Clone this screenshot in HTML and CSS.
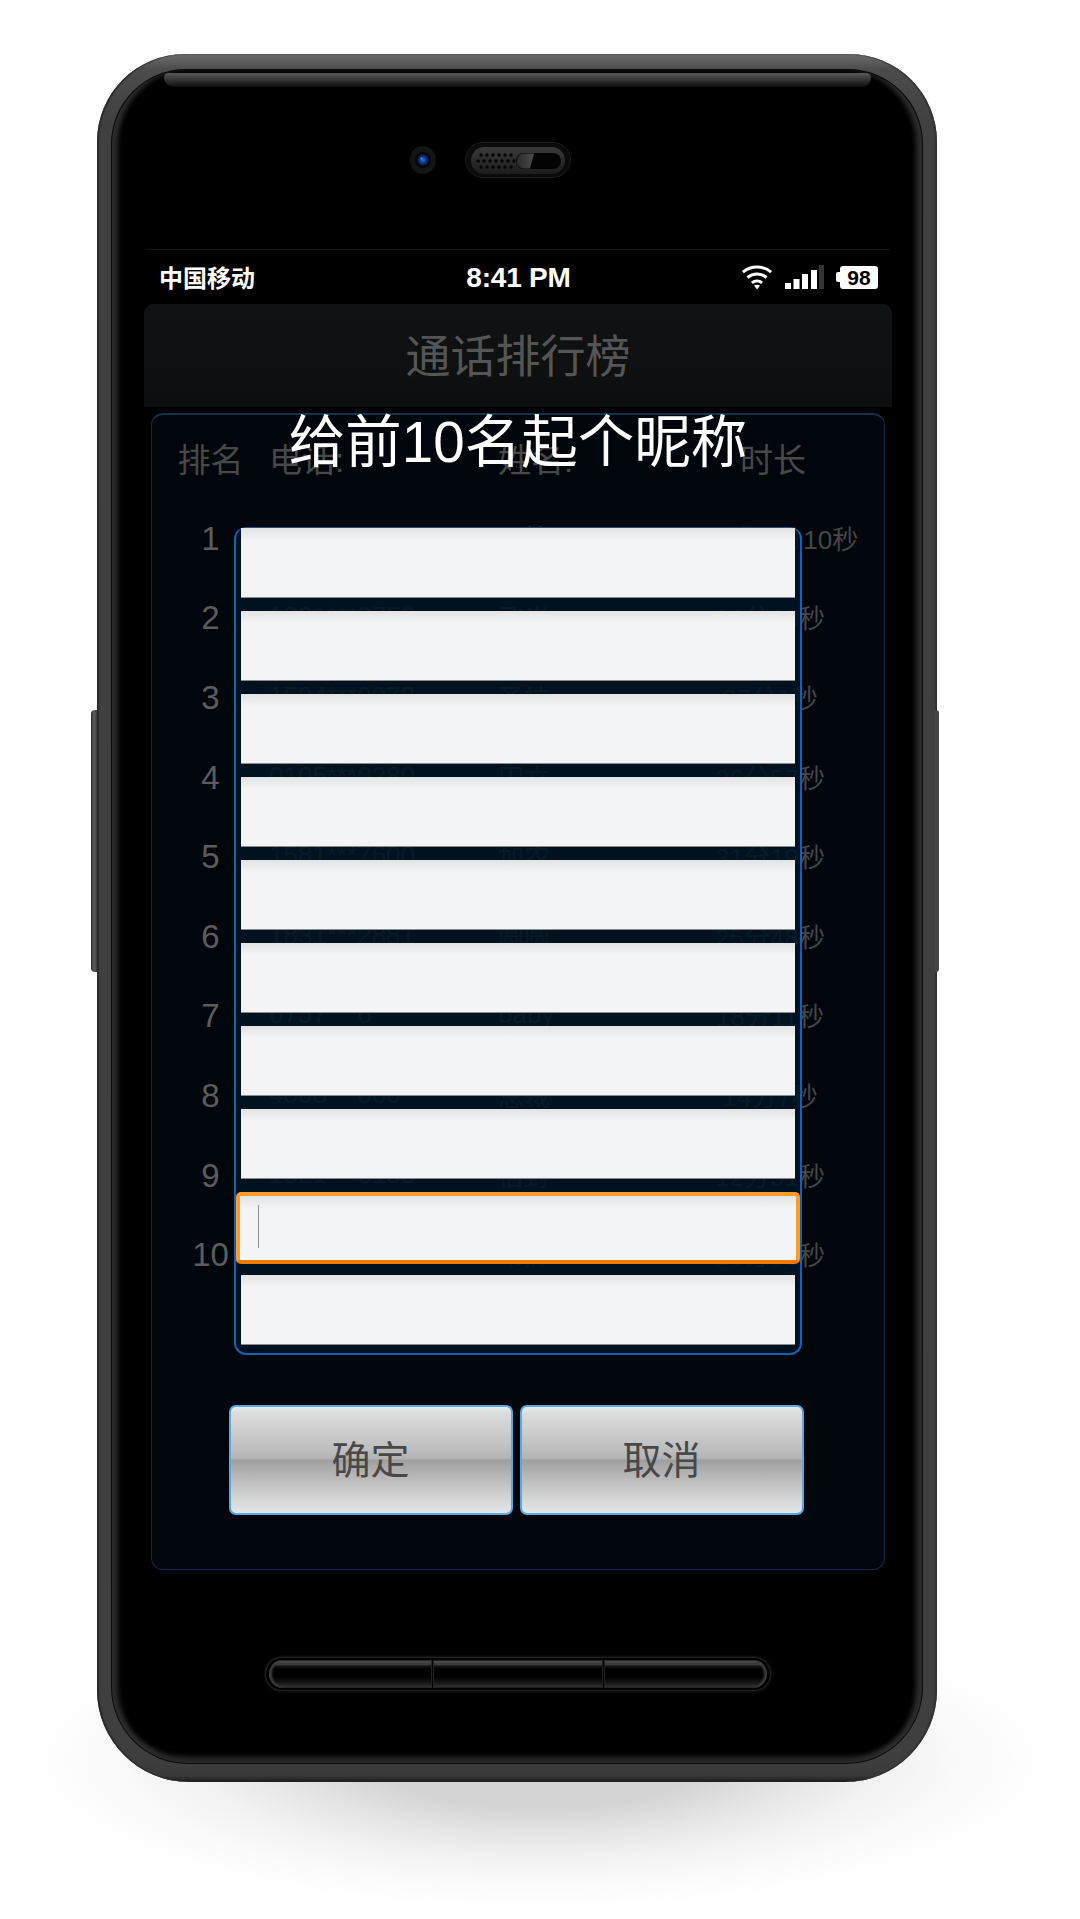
FILE: index.html
```html
<!DOCTYPE html>
<html lang="zh-CN">
<head>
<meta charset="utf-8">
<title>通话排行榜</title>
<link rel="stylesheet" href="styles.css">
</head>
<body>
<div class="stage">
  <div class="floor-shadow"></div>
  <div class="phone">
    <div class="side-key side-key-left"></div>
    <div class="side-key side-key-right"></div>
    <div class="glass">
      <div class="top-shine"></div>
      <div class="sensors">
        <svg class="camera" width="26" height="28" viewBox="0 0 26 28">
          <defs>
            <radialGradient id="lens" cx="50%" cy="50%" r="50%">
              <stop offset="0" stop-color="#2b6fd0"/>
              <stop offset="0.6" stop-color="#0b2f80"/>
              <stop offset="1" stop-color="#04102c"/>
            </radialGradient>
          </defs>
          <ellipse cx="13" cy="14" rx="13" ry="14" fill="#141414"/>
          <circle cx="13" cy="14" r="8" fill="#060606"/>
          <circle cx="13" cy="14" r="6" fill="url(#lens)"/>
          <circle cx="11.5" cy="12.5" r="1" fill="#5d93e0"/>
        </svg>
        <svg class="speaker" width="106" height="36" viewBox="0 0 106 36">
          <defs>
            <linearGradient id="spk" x1="0" y1="0" x2="0" y2="1">
              <stop offset="0" stop-color="#3a3a3a"/>
              <stop offset="1" stop-color="#1c1c1c"/>
            </linearGradient>
            <linearGradient id="knob" x1="0" y1="0" x2="1" y2="0">
              <stop offset="0" stop-color="#2a2a2a"/>
              <stop offset="1" stop-color="#4a4a4a"/>
            </linearGradient>
          </defs>
          <rect x="0.5" y="0.5" width="105" height="35" rx="17.5" fill="#0b0b0b" stroke="#1d1d1d"/>
          <rect x="6" y="5" width="94" height="27" rx="13.5" fill="url(#spk)"/>
          <g fill="#050505">
            <circle cx="16" cy="13" r="1.7"/><circle cx="22" cy="13" r="1.7"/><circle cx="28" cy="13" r="1.7"/><circle cx="34" cy="13" r="1.7"/><circle cx="40" cy="13" r="1.7"/><circle cx="46" cy="13" r="1.7"/>
            <circle cx="13" cy="19" r="1.7"/><circle cx="19" cy="19" r="1.7"/><circle cx="25" cy="19" r="1.7"/><circle cx="31" cy="19" r="1.7"/><circle cx="37" cy="19" r="1.7"/><circle cx="43" cy="19" r="1.7"/><circle cx="49" cy="19" r="1.7"/>
            <circle cx="16" cy="25" r="1.7"/><circle cx="22" cy="25" r="1.7"/><circle cx="28" cy="25" r="1.7"/><circle cx="34" cy="25" r="1.7"/><circle cx="40" cy="25" r="1.7"/><circle cx="46" cy="25" r="1.7"/>
          </g>
          <rect x="51" y="11" width="45" height="16" rx="8" fill="#030303"/>
          <path d="M59 11.500 H69 L65 26.500 H59 A7.500 7.500 0 0 1 59 11.500Z" fill="url(#knob)"/>
        </svg>
        <span></span>
      </div>
      <div class="status-bar">
        <span class="carrier">中国移动</span>
        <span class="clock">8:41 PM</span>
        <div class="status-icons">
          <svg width="32" height="26" viewBox="0 0 32 26" fill="none" stroke="#fff" stroke-width="3">
            <path d="M1.900 8.150A22 22 0 0 1 30.100 8.150"/>
            <path d="M6.400 13.500A15 15 0 0 1 25.600 13.500"/>
            <path d="M10.900 18.900A8 8 0 0 1 21.100 18.900"/>
            <path d="M13 21.500L16 25.500L19 21.500Q16 20 13 21.500Z" fill="#fff" stroke="none"/>
          </svg>
          <svg width="39" height="24" viewBox="0 0 39 24" fill="#fff">
            <rect x="0" y="18" width="6" height="6"/>
            <rect x="8.500" y="14" width="6" height="10"/>
            <rect x="17" y="9" width="6" height="15"/>
            <rect x="26" y="5" width="6" height="19"/>
            <rect x="34" y="0" width="5" height="24" fill="#333"/>
          </svg>
          <div class="battery"><span class="battery-nub"></span><span class="battery-body">98</span></div>
        </div>
      </div>
      <div class="title-bar">通话排行榜</div>
      <div class="panel">
        <div class="row head">
          <span class="rank-head">排名</span><span>电话:</span><span>姓名:</span><span class="time-head">时长</span>
        </div>
        <div class="row"><span class="rank">1</span><span class="cell">1596***2278</span><span class="cell">圣拉</span><span class="cell time">1小时21分10秒</span></div>
        <div class="row"><span class="rank">2</span><span class="cell">1881***8756</span><span class="cell">飞光</span><span class="cell time">31分38秒</span></div>
        <div class="row"><span class="rank">3</span><span class="cell">1594***9978</span><span class="cell">圣拉</span><span class="cell time">37分1秒</span></div>
        <div class="row"><span class="rank">4</span><span class="cell">0105***0280</span><span class="cell">田立</span><span class="cell time">36分57秒</span></div>
        <div class="row"><span class="rank">5</span><span class="cell">1581***7600</span><span class="cell">加农</span><span class="cell time">31分19秒</span></div>
        <div class="row"><span class="rank">6</span><span class="cell">1831***2881</span><span class="cell">圆圆</span><span class="cell time">25分48秒</span></div>
        <div class="row"><span class="rank">7</span><span class="cell">6757***6</span><span class="cell">baby</span><span class="cell time">18分11秒</span></div>
        <div class="row"><span class="rank">8</span><span class="cell">4008***866</span><span class="cell">总裁</span><span class="cell time">14分7秒</span></div>
        <div class="row"><span class="rank">9</span><span class="cell">1821***6186</span><span class="cell">佰封</span><span class="cell time">12分51秒</span></div>
        <div class="row"><span class="rank">10</span><span class="cell">1532***5515</span><span class="cell">韦卿</span><span class="cell time">10分52秒</span></div>
        <div class="dialog">
          <div class="dialog-title">给前10名起个昵称</div>
          <div class="field-list">
            <div class="field"></div>
            <div class="field"></div>
            <div class="field"></div>
            <div class="field"></div>
            <div class="field"></div>
            <div class="field"></div>
            <div class="field"></div>
            <div class="field"></div>
            <div class="field field-focus"><span class="caret"></span></div>
            <div class="field"></div>
          </div>
          <div class="actions">
            <div class="btn">确定</div>
            <div class="btn">取消</div>
          </div>
        </div>
      </div>
      <div class="home-keys">
        <div class="home-key home-key-a"></div>
        <div class="home-key home-key-b"></div>
        <div class="home-key home-key-c"></div>
      </div>
    </div>
  </div>
</div>
</body>
</html>
```
FILE: styles.css
```css
* { box-sizing: border-box; }
html, body { margin: 0; padding: 0; background: #fff; }
body {
  width: 1080px;
  height: 1919px;
  overflow: hidden;
  font-family: "Liberation Sans", "Noto Sans CJK SC", sans-serif;
}
.stage {
  position: relative;
  height: 1919px;
  padding: 54px 143px 0 97px;
}
.floor-shadow {
  position: absolute;
  left: 20px;
  top: 1610px;
  width: 1040px;
  height: 300px;
  background: radial-gradient(ellipse 50% 50% at 50% 50%, rgba(0,0,0,.17) 0, rgba(0,0,0,.17) 32%, rgba(0,0,0,.1) 50%, rgba(0,0,0,.05) 66%, rgba(0,0,0,.02) 82%, rgba(0,0,0,0) 100%);
}
.phone {
  position: relative;
  width: 840px;
  height: 1728px;
  padding: 16px 15px 19px;
  border-radius: 88px 88px 92px 92px;
  background: linear-gradient(#686868 0, #5c5c5c 8px, #4c4c4c 15px, #404040 70px, #3f3f3f 1690px, #3d3d3d 1712px, #383838 1722px, #1c1c1c 1728px);
  box-shadow: inset 2px 0 1px #2a2a2a, inset -2px 0 1px #333;
}
.side-key {
  position: absolute;
  top: 656px;
  width: 6px;
  height: 262px;
  background: linear-gradient(90deg, #2a2a2a, #5e5e5e 50%, #3a3a3a);
}
.side-key-left { left: -6px; border-radius: 4px 0 0 4px; }
.side-key-right { right: -2px; width: 4px; background: #444; border-radius: 0 3px 3px 0; }
.glass {
  position: relative;
  height: 1693px;
  padding: 72px 30px 0 32px;
  border-radius: 74px 74px 76px 76px;
  background: #000;
  box-shadow:
    0 0 0 1px #0a0a0a,
    inset 8px 0 5px -2px #2c2c2c,
    inset -8px 0 5px -2px #2c2c2c,
    inset 0 -8px 5px -2px #2a2a2a;
}
.top-shine {
  position: absolute;
  left: 52px;
  right: 51px;
  top: 3px;
  height: 14px;
  border-radius: 7px 7px 14px 14px;
  background: linear-gradient(#5a5a5a, #2c2c2c 60%, #0c0c0c);
}
.sensors {
  display: grid;
  grid-template-columns: 1fr auto 1fr;
  align-items: center;
  height: 36px;
  margin: 0 0 71px;
}
.camera { justify-self: end; margin-right: 29px; }
.speaker { display: block; }
.status-bar {
  display: grid;
  grid-template-columns: 1fr auto 1fr;
  align-items: center;
  height: 55px;
  margin: 0 2px 0 1px;
  padding: 0 12px 0 14px;
  border-top: 1px solid #161616;
  color: #fff;
}
.carrier { padding-bottom: 2px; font-size: 24px; font-weight: 700; }
.clock { padding-top: 1px; font-size: 28px; font-weight: 700; letter-spacing: -.2px; }
.status-icons {
  display: flex;
  justify-content: flex-end;
  align-items: center;
  gap: 12px;
}
.status-icons svg { display: block; }
.battery { display: flex; align-items: center; }
.battery-nub {
  width: 4px;
  height: 10px;
  background: #fff;
  border-radius: 2px 0 0 2px;
}
.battery-body {
  width: 38px;
  height: 23px;
  border-radius: 3px;
  background: #fff;
  color: #000;
  font-size: 21px;
  font-weight: 700;
  line-height: 23px;
  text-align: center;
}
.title-bar {
  height: 103px;
  margin-bottom: 6px;
  border-radius: 10px 10px 0 0;
  background: linear-gradient(#111213, #0d0e0f);
  color: #555;
  font-size: 45px;
  line-height: 107px;
  text-align: center;
}
.panel {
  position: relative;
  height: 1157px;
  margin: 0 7px;
  padding-top: 19px;
  border: 1px solid #0e2a4a;
  border-top: 2px solid #16304e;
  border-radius: 12px;
  background: #00060c;
}
.row {
  display: grid;
  grid-template-columns: 117px 229px 163px 1fr;
  align-items: center;
  height: 79.6px;
  color: #464646;
  white-space: nowrap;
}
.head {
  height: 40px;
  margin-bottom: 25px;
  color: #484848;
  font-size: 33px;
}
.rank-head { text-align: center; }
.time-head { padding-left: 79px; }
.rank {
  color: #5c5c5c;
  font-size: 33px;
  text-align: center;
}
.cell {
  padding-bottom: 3px;
  font-size: 26px;
}
.time { text-align: center; padding-right: 5px; }
.dialog {
  position: absolute;
  inset: -2px -1px -1px;
  display: flex;
  flex-direction: column;
  align-items: center;
}
.dialog-title {
  height: 56px;
  margin: 2px 0 56px;
  color: #fff;
  font-size: 56.500px;
  line-height: 56px;
  white-space: nowrap;
}
.field-list {
  display: flex;
  flex-direction: column;
  gap: 13px;
  width: 568px;
  height: 828px;
  padding: 0 5px;
  border: 2px solid #185fb4;
  border-top: 1px solid #24507e;
  border-radius: 12px;
  background: rgba(0, 20, 34, .88);
}
.field {
  flex: none;
  height: 70px;
  border-bottom: 1px solid #8a8a8a;
  background: linear-gradient(#e2e3e5, #f3f4f6 12px);
}
.field-focus {
  height: 72px;
  margin: 0 -5px -2px;
  padding: 9px 0 0 18px;
  border: 4px solid #ff9a22;
  border-bottom-color: #ee7c02;
  border-radius: 5px;
}
.caret {
  display: block;
  width: 1px;
  height: 43px;
  background: #8e8e8e;
}
.actions {
  display: flex;
  gap: 7px;
  margin: 50px 4px 0 0;
}
.btn {
  width: 284px;
  height: 110px;
  border: 2px solid #5aa8e0;
  border-radius: 7px;
  background: linear-gradient(#e9edee 0, #dcdcdc 6%, #bcbcbc 42%, #b2b2b2 49%, #9e9e9e 50%, #a9a9a9 56%, #cfcfcf 82%, #e2e7ea 100%);
  color: #484848;
  font-size: 39px;
  line-height: 108px;
  text-align: center;
}
.home-keys {
  display: flex;
  gap: 1px;
  width: 506px;
  height: 34px;
  margin: 87px 0 0 121px;
  padding: 2px 3px;
  border: 1px solid #202020;
  border-radius: 17px;
  background: #000;
  box-shadow: 0 0 3px #2a2a2a;
}
.home-key {
  background: linear-gradient(#121212 0, #5a5a5a 2px, #2c2c2c 3px, #484848 4px, #161616 6px, #000 9px, #000 17px, #181818 23px, #303030 27px, #0c0c0c 28px);
  box-shadow: inset 1px 0 #222, inset -1px 0 #222;
}
.home-key-a { width: 163px; border-radius: 14px 0 0 14px; box-shadow: inset 3px 0 2px #3c3c3c, inset -1px 0 #222; }
.home-key-b { width: 170px; }
.home-key-c { flex: 1; border-radius: 0 14px 14px 0; box-shadow: inset -3px 0 2px #3c3c3c, inset 1px 0 #222; }
```
